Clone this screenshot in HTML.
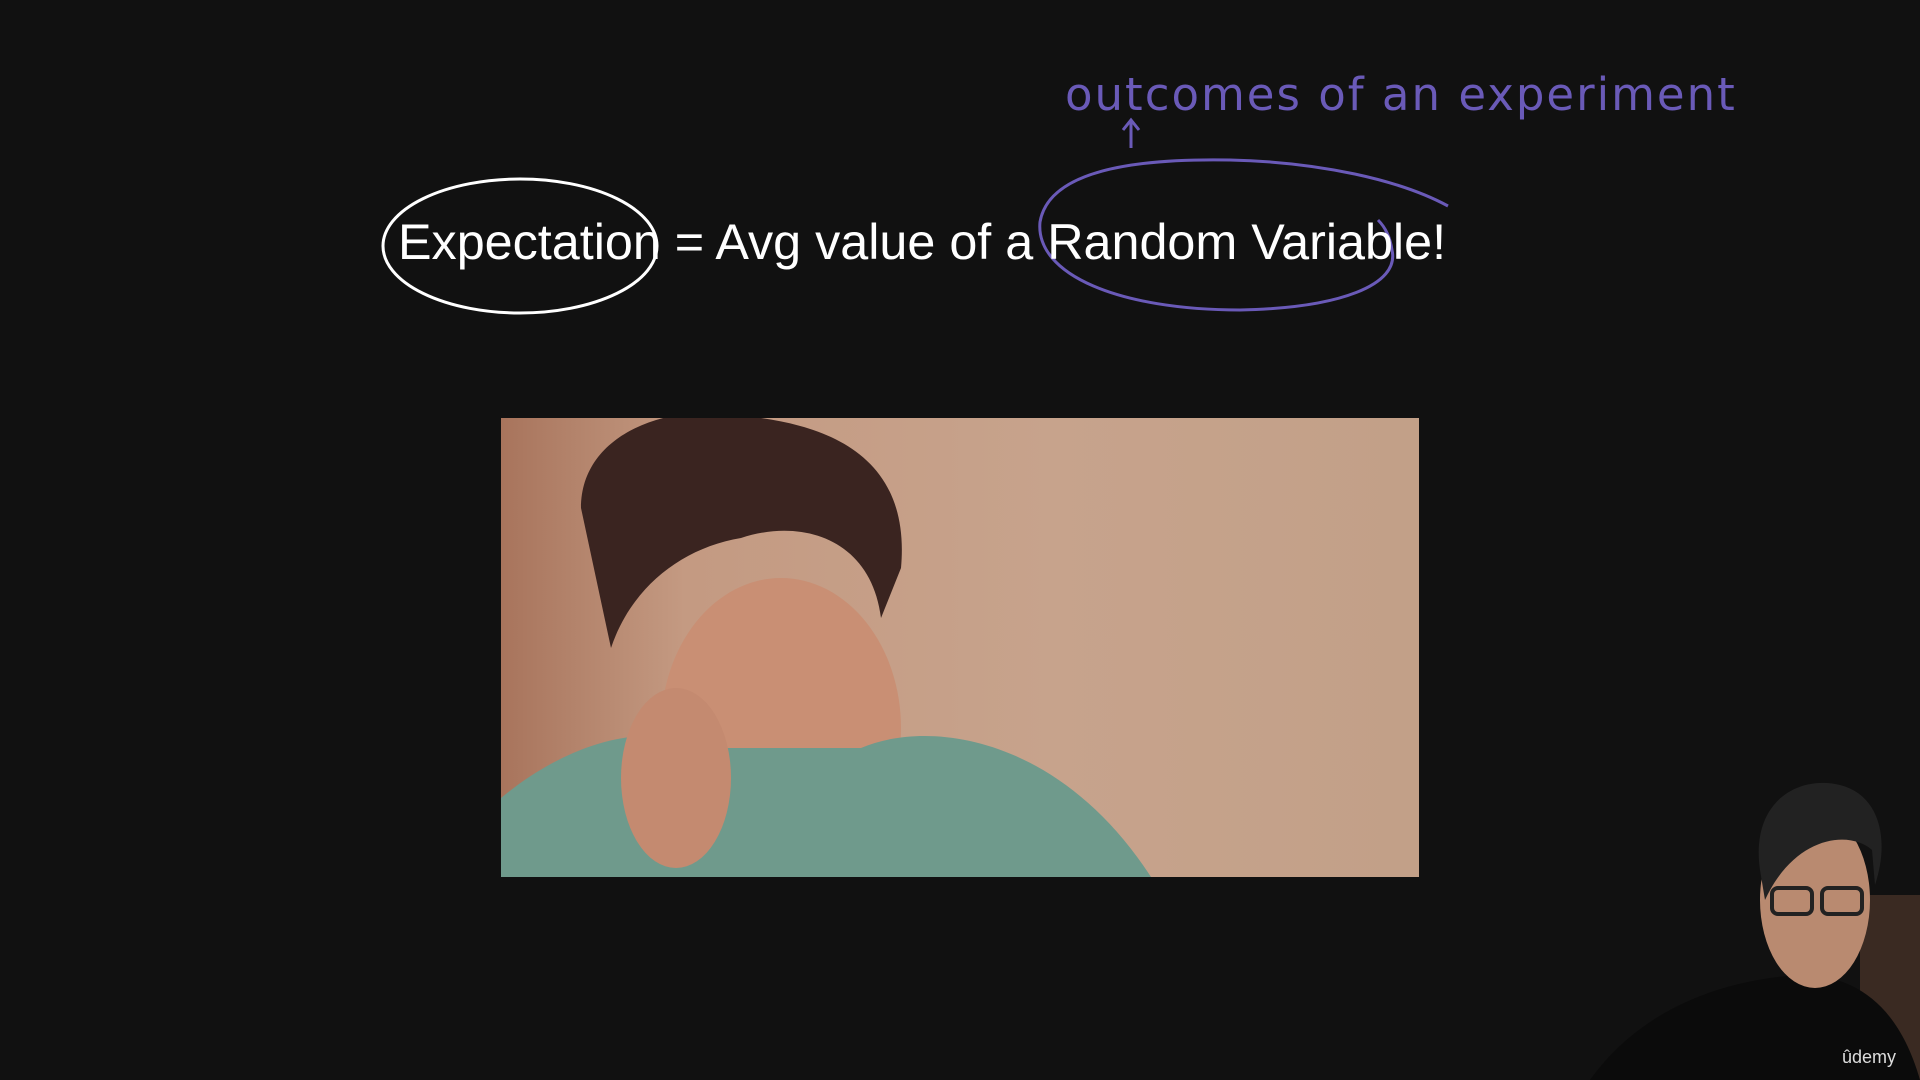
<!DOCTYPE html>
<html><head><meta charset="utf-8"><style>
html,body{margin:0;padding:0;background:#111111;width:1920px;height:1080px;overflow:hidden}
.title{position:absolute;left:398px;top:212px;font-family:"Liberation Sans",sans-serif;font-size:50.3px;color:#fff;white-space:nowrap}
.photo{position:absolute;left:501px;top:418px;width:918px;height:459px;overflow:hidden;background:linear-gradient(90deg,#a8745c 0%,#c49a82 20%,#c7a38c 60%,#c2a088 100%)}
</style></head><body>
<svg width="1920" height="1080" style="position:absolute;left:0;top:0">
<text x="1065" y="110" font-family="'DejaVu Sans',sans-serif" font-size="45" fill="#6a5ab8" letter-spacing="2">outcomes of  an experiment</text>
<path d="M1131 148 L1131 122 M1123 130 L1131 120 L1139 130" stroke="#6a5ab8" stroke-width="3" fill="none"/>
<ellipse cx="520" cy="246" rx="137" ry="67" fill="none" stroke="#fff" stroke-width="3"/>
<path d="M1448 206 C1400 180 1320 162 1230 160 C1120 158 1048 175 1040 222 C1035 275 1120 310 1240 310 C1340 308 1400 285 1392 250 C1390 236 1384 226 1378 220" fill="none" stroke="#6a5ab8" stroke-width="3"/>
</svg>
<div class="title">Expectation = Avg value of a Random Variable!</div>
<div class="photo">
<svg width="918" height="459">
<ellipse cx="280" cy="310" rx="120" ry="150" fill="#c98f74"/>
<path d="M80 90 C80 10 180 -20 260 0 C330 10 410 40 400 150 L380 200 C370 120 300 100 240 120 C180 130 130 170 110 230 Z" fill="#3a2420"/>
<path d="M0 380 C60 330 140 300 200 330 L360 330 C430 300 560 320 650 459 L0 459 Z" fill="#6f9a8c"/>
<ellipse cx="175" cy="360" rx="55" ry="90" fill="#c48a70"/>
</svg>
</div>
<svg width="360" height="320" style="position:absolute;left:1560px;top:760px">
<rect x="300" y="135" width="60" height="185" fill="#3a2a22"/>
<path d="M30 320 C80 250 160 220 240 215 C300 215 340 250 360 320 Z" fill="#0b0b0b"/>
<ellipse cx="255" cy="140" rx="55" ry="88" fill="#b98a70"/>
<path d="M200 110 C190 40 240 15 280 25 C320 35 330 80 315 125 L312 90 C290 70 235 75 205 140 Z" fill="#222"/>
<rect x="212" y="128" width="40" height="26" rx="6" fill="none" stroke="#222" stroke-width="4"/>
<rect x="262" y="128" width="40" height="26" rx="6" fill="none" stroke="#222" stroke-width="4"/>
<text x="282" y="303" font-family="Liberation Sans,sans-serif" font-size="18" fill="#ddd">ûdemy</text>
</svg>
</body></html>
